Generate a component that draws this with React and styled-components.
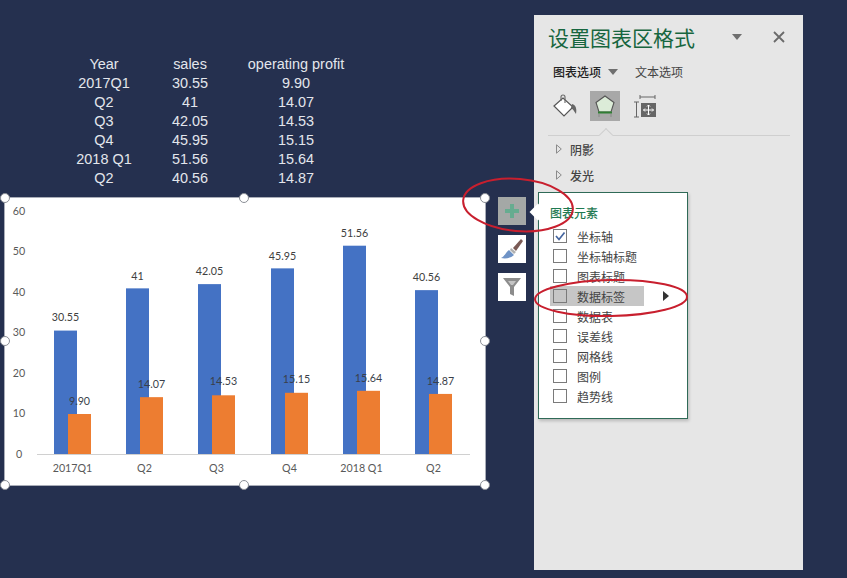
import React from "react";
import styled, { createGlobalStyle } from "styled-components";

const Global = createGlobalStyle`
  html, body { margin: 0; padding: 0; background: #25304f; }
  body { font-family: "Noto Sans CJK SC", "Liberation Sans", sans-serif; }
`;
const Stage = styled.div`
  position: relative; width: 847px; height: 578px; overflow: hidden;
  background: #25304f; display: flex; align-items: flex-start;
`;
const LeftColumn = styled.div`
  width: 480px; margin-left: 5px; padding-top: 55px; flex: none;
`;
const DataTable = styled.div`
  display: grid; grid-template-columns: 88px 84px 128px; grid-auto-rows: 19px;
  margin: 0 0 0 55px; width: 300px; height: 143px;
  font: 14.45px/19px "Liberation Sans", Arial, sans-serif; color: #e3e6ec; text-align: center;
`;
const Chart = styled.div`
  position: relative; width: 480px; height: 287px; background: #fff;
  box-shadow: 0 0 0 1px #a9adb8;
  svg { display: block; }
`;
const Handle = styled.span`
  position: absolute; width: 8px; height: 8px; border-radius: 50%; background: #fff;
  border: 1.5px solid #8b8f96; transform: translate(-50%, -50%);
  left: ${p => p.$x}px; top: ${p => p.$y}px;
`;
const Tools = styled.div`
  display: flex; flex-direction: column; gap: 10px; width: 28px; margin: 197px 0 0 13px; flex: none;
`;
const ToolButton = styled.div`
  width: 28px; height: 28px; display: flex; align-items: center; justify-content: center;
  background: ${p => (p.$active ? "#a4a8a6" : "#fff")};
`;
const Panel = styled.div`
  width: 269px; height: 555px; margin: 15px 0 0 8px; flex: none; background: #e6e6e6;
  padding: 8px 13px 0 14px; box-sizing: border-box;
`;
const PanelHead = styled.div`display: flex; align-items: center; height: 28px;`;
const PanelTitle = styled.div`
  font-size: 21px; line-height: 28px; color: #17663f; width: 184px; white-space: nowrap;
`;
const HeadTriangle = styled.span`
  width: 0; height: 0; border: 5px solid transparent; border-top: 6px solid #6f6f6f; border-bottom: 0;
`;
const CloseBox = styled.span`margin-left: 31px; display: flex;`;
const Tabs = styled.div`display: flex; align-items: center; margin: 12px 0 0 5px; height: 18px;`;
const Tab = styled.span`
  font-size: 12px; line-height: 18px; color: ${p => (p.$on ? "#222" : "#444")};
  font-weight: ${p => (p.$on ? 500 : 400)};
`;
const TabCaret = styled.span`
  width: 0; height: 0; margin: 0 17px 0 7px; border: 5px solid transparent; border-top: 6px solid #6f6f6f; border-bottom: 0;
`;
const IconRow = styled.div`display: flex; align-items: center; gap: 10px; margin: 10px 0 0 2px; height: 30px;`;
const IconCell = styled.div`
  width: 30px; height: 30px; display: flex; align-items: center; justify-content: center;
  background: ${p => (p.$active ? "#a8a8a8" : "transparent")};
`;
const Rule = styled.div`
  position: relative; width: 242px; height: 1px; background: #cfcfcf; margin-top: 14px;
  &::after {
    content: ""; position: absolute; left: 53px; top: -5px; width: 9px; height: 9px;
    background: #e6e6e6; border-left: 1px solid #cfcfcf; border-top: 1px solid #cfcfcf;
    transform: rotate(45deg);
  }
`;
const Section = styled.div`
  display: flex; align-items: center; gap: 8px; height: 26px; padding-left: 8px;
  font-size: 12px; font-weight: 500; color: #444;
`;
const SectionList = styled.div`margin-top: 0;`;
const Popup = styled.div`
  position: absolute; left: 538px; top: 192px; width: 150px; height: 227px; box-sizing: border-box;
  background: #fff; border: 1px solid #2f6a57; box-shadow: 1px 2px 3px rgba(0,0,0,.2);
  padding: 11px 0 0 11px;
`;
const PopupTitle = styled.div`
  font-size: 12px; line-height: 18px; font-weight: 500; color: #1f7a52; margin-bottom: 4px;
`;
const PopupRow = styled.div`
  position: relative; display: flex; align-items: center; height: 20px; width: 94px; padding-left: 3px; box-sizing: border-box;
  font-size: 12px; color: #444; white-space: nowrap;
  background: ${p => (p.$hover ? "#c6c6c6" : "transparent")};
`;
const Check = styled.span`
  width: 12px; height: 12px; border: 1px solid #7a7a7a; margin-right: 10px; flex: none; display: flex;
`;
const RowArrow = styled.span`
  position: absolute; left: 113px; top: 5px; width: 0; height: 0;
  border: 5px solid transparent; border-left: 6px solid #333; border-right: 0;
`;
const Pointer = styled.span`
  position: absolute; left: 532px; top: 206px; width: 12px; height: 12px; background: #fff;
  transform: rotate(45deg);
`;
const Overlay = styled.svg`position: absolute; left: 0; top: 0; pointer-events: none;`;

const rows = [
  ["Year", "sales", "operating profit"],
  ["2017Q1", "30.55", "9.90"],
  ["Q2", "41", "14.07"],
  ["Q3", "42.05", "14.53"],
  ["Q4", "45.95", "15.15"],
  ["2018 Q1", "51.56", "15.64"],
  ["Q2", "40.56", "14.87"],
];
// x values are relative to the chart's left edge; sy / py are the label baselines
const series = [
  { q: "2017Q1", s: 30.55, p: 9.9, pl: "9.90", x: 49, sy: 123, py: 207 },
  { q: "Q2", s: 41, p: 14.07, pl: "14.07", x: 121, sy: 82, py: 190 },
  { q: "Q3", s: 42.05, p: 14.53, pl: "14.53", x: 193, sy: 77, py: 187 },
  { q: "Q4", s: 45.95, p: 15.15, pl: "15.15", x: 266, sy: 62, py: 185 },
  { q: "2018 Q1", s: 51.56, p: 15.64, pl: "15.64", x: 338, sy: 39, py: 184 },
  { q: "Q2", s: 40.56, p: 14.87, pl: "14.87", x: 410, sy: 83, py: 187 },
];
const baseY = 256;
const scale = 4.04;
const handles = [[0,0],[239,0],[480,0],[0,143],[480,143],[0,287],[239,287],[480,287]];
const items = ["坐标轴","坐标轴标题","图表标题","数据标签","数据表","误差线","网格线","图例","趋势线"];

const ChartDrawing = () => (
  <svg width="480" height="287" fontFamily="Lato, Carlito, sans-serif" fontSize="10.7">
    {[60,50,40,30,20,10,0].map(v => (
      <text key={v} x="14" y={baseY - v * 4.05 + 3.5} textAnchor="middle" fill="#595959">{v}</text>
    ))}
    <line x1="32" x2="465" y1={baseY + .5} y2={baseY + .5} stroke="#d0d0d0" />
    {series.map(d => (
      <g key={d.x}>
        <rect x={d.x} y={baseY - d.s * scale} width="23" height={d.s * scale} fill="#4472c4" />
        <rect x={d.x + 14} y={baseY - d.p * scale} width="23" height={d.p * scale} fill="#ed7d31" />
        <text x={d.x + 11.5} y={d.sy} textAnchor="middle" fill="#404040">{d.s}</text>
        <text x={d.x + 25.5} y={d.py} textAnchor="middle" fill="#3a3f4a">{d.pl}</text>
        <text x={d.x + 18.5} y={baseY + 18} textAnchor="middle" fill="#595959">{d.q}</text>
      </g>
    ))}
  </svg>
);

const Bucket = () => (
  <svg width="26" height="24" viewBox="0 0 26 24">
    <path d="M2 12 L11 4 L21 13 L12 22 Z" fill="#fff" stroke="#555" strokeWidth="1.2" />
    <path d="M9 7 V3 a2 2 0 0 1 4 0 V9" fill="none" stroke="#666" strokeWidth="1.1" />
    <path d="M20 10 C24 11 25 15 24 20 C22 17 21 15 19 14 Z" fill="#666" />
  </svg>
);
const Pentagon = () => (
  <svg width="20" height="24" viewBox="0 0 20 24">
    <path d="M10 2 L19 8.5 L16 18 H4 L1 8.5 Z" fill="#dcecd8" stroke="#555" strokeWidth="1.1" />
    <path d="M3 18.5 H17" stroke="#2f7d32" strokeWidth="2" />
    <path d="M4 20 V23 M16 20 V23" stroke="#888" strokeWidth="1" />
  </svg>
);
const SizeIcon = () => (
  <svg width="24" height="24" viewBox="0 0 24 24">
    <path d="M7 1 V5 M22 1 V5 M7 3 H22" stroke="#666" fill="none" />
    <path d="M1 8 H6 M1 23 H6 M3.5 8 V23" stroke="#666" fill="none" />
    <rect x="8" y="9" width="15" height="14" fill="#666" />
    <path d="M15.5 11 V21 M10.5 16 H20.5 M14 12.5 L15.5 11 L17 12.5 M14 19.5 L15.5 21 L17 19.5 M12 14.5 L10.5 16 L12 17.5 M19 14.5 L20.5 16 L19 17.5" stroke="#fff" fill="none" />
  </svg>
);
const Plus = () => (
  <svg width="14" height="14" viewBox="0 0 14 14"><path d="M5 0 H9 V5 H14 V9 H9 V14 H5 V9 H0 V5 H5 Z" fill="#66ac90" /></svg>
);
const Brush = () => (
  <svg width="24" height="24" viewBox="0 0 24 24">
    <path d="M13 11 L21 2 L23 4 L16 14 Z" fill="#7a5a55" />
    <path d="M11 11 L16 15 L14 17 L10 13 Z" fill="#b0b0b0" />
    <path d="M9 13 L14 18 C11 21 6 22 1 21 C5 19 6 15 9 13 Z" fill="#6f93c6" />
  </svg>
);
const Funnel = () => (
  <svg width="20" height="20" viewBox="0 0 20 20">
    <path d="M1 1 H19 L12 10 V19 L8 17 V10 Z" fill="#8c8c8c" />
    <path d="M6 4 H14 L11 8 H9 Z" fill="#c4c4c4" />
  </svg>
);
const CheckMark = () => (
  <svg width="12" height="12" viewBox="0 0 12 12"><path d="M2 6 L5 9.5 L10.5 2.5" fill="none" stroke="#44659f" strokeWidth="1.7" /></svg>
);
const OpenTriangle = () => (
  <svg width="6" height="10" viewBox="0 0 6 10"><path d="M.5 .8 L5.3 5 L.5 9.2 Z" fill="none" stroke="#8a8a8a" /></svg>
);
const Close = () => (
  <svg width="12" height="12" viewBox="0 0 12 12"><path d="M1 1 L11 11 M11 1 L1 11" stroke="#6a6a6a" strokeWidth="1.8" /></svg>
);

export default function App() {
  return (
    <Stage>
      <Global />
      <LeftColumn>
        <DataTable>
          {rows.flat().map((c, i) => <span key={i}>{c}</span>)}
        </DataTable>
        <Chart>
          <ChartDrawing />
          {handles.map(([x, y]) => <Handle key={`${x}-${y}`} $x={x} $y={y} />)}
        </Chart>
      </LeftColumn>
      <Tools>
        <ToolButton $active><Plus /></ToolButton>
        <ToolButton><Brush /></ToolButton>
        <ToolButton><Funnel /></ToolButton>
      </Tools>
      <Panel>
        <PanelHead>
          <PanelTitle>设置图表区格式</PanelTitle>
          <HeadTriangle />
          <CloseBox><Close /></CloseBox>
        </PanelHead>
        <Tabs>
          <Tab $on>图表选项</Tab>
          <TabCaret />
          <Tab>文本选项</Tab>
        </Tabs>
        <IconRow>
          <IconCell><Bucket /></IconCell>
          <IconCell $active><Pentagon /></IconCell>
          <IconCell><SizeIcon /></IconCell>
        </IconRow>
        <Rule />
        <SectionList>
          <Section><OpenTriangle />阴影</Section>
          <Section><OpenTriangle />发光</Section>
        </SectionList>
      </Panel>
      <Popup>
        <PopupTitle>图表元素</PopupTitle>
        {items.map((t, i) => (
          <PopupRow key={t} $hover={i === 3}>
            <Check>{i === 0 && <CheckMark />}</Check>
            {t}
            {i === 3 && <RowArrow />}
          </PopupRow>
        ))}
      </Popup>
      <Pointer />
      <Overlay width="847" height="578" fill="none" stroke="#c81f2e" strokeWidth="2">
        <ellipse cx="518" cy="205" rx="55" ry="26" transform="rotate(5 518 205)" />
        <ellipse cx="611" cy="298" rx="76" ry="18" transform="rotate(-1 611 298)" />
      </Overlay>
    </Stage>
  );
}
